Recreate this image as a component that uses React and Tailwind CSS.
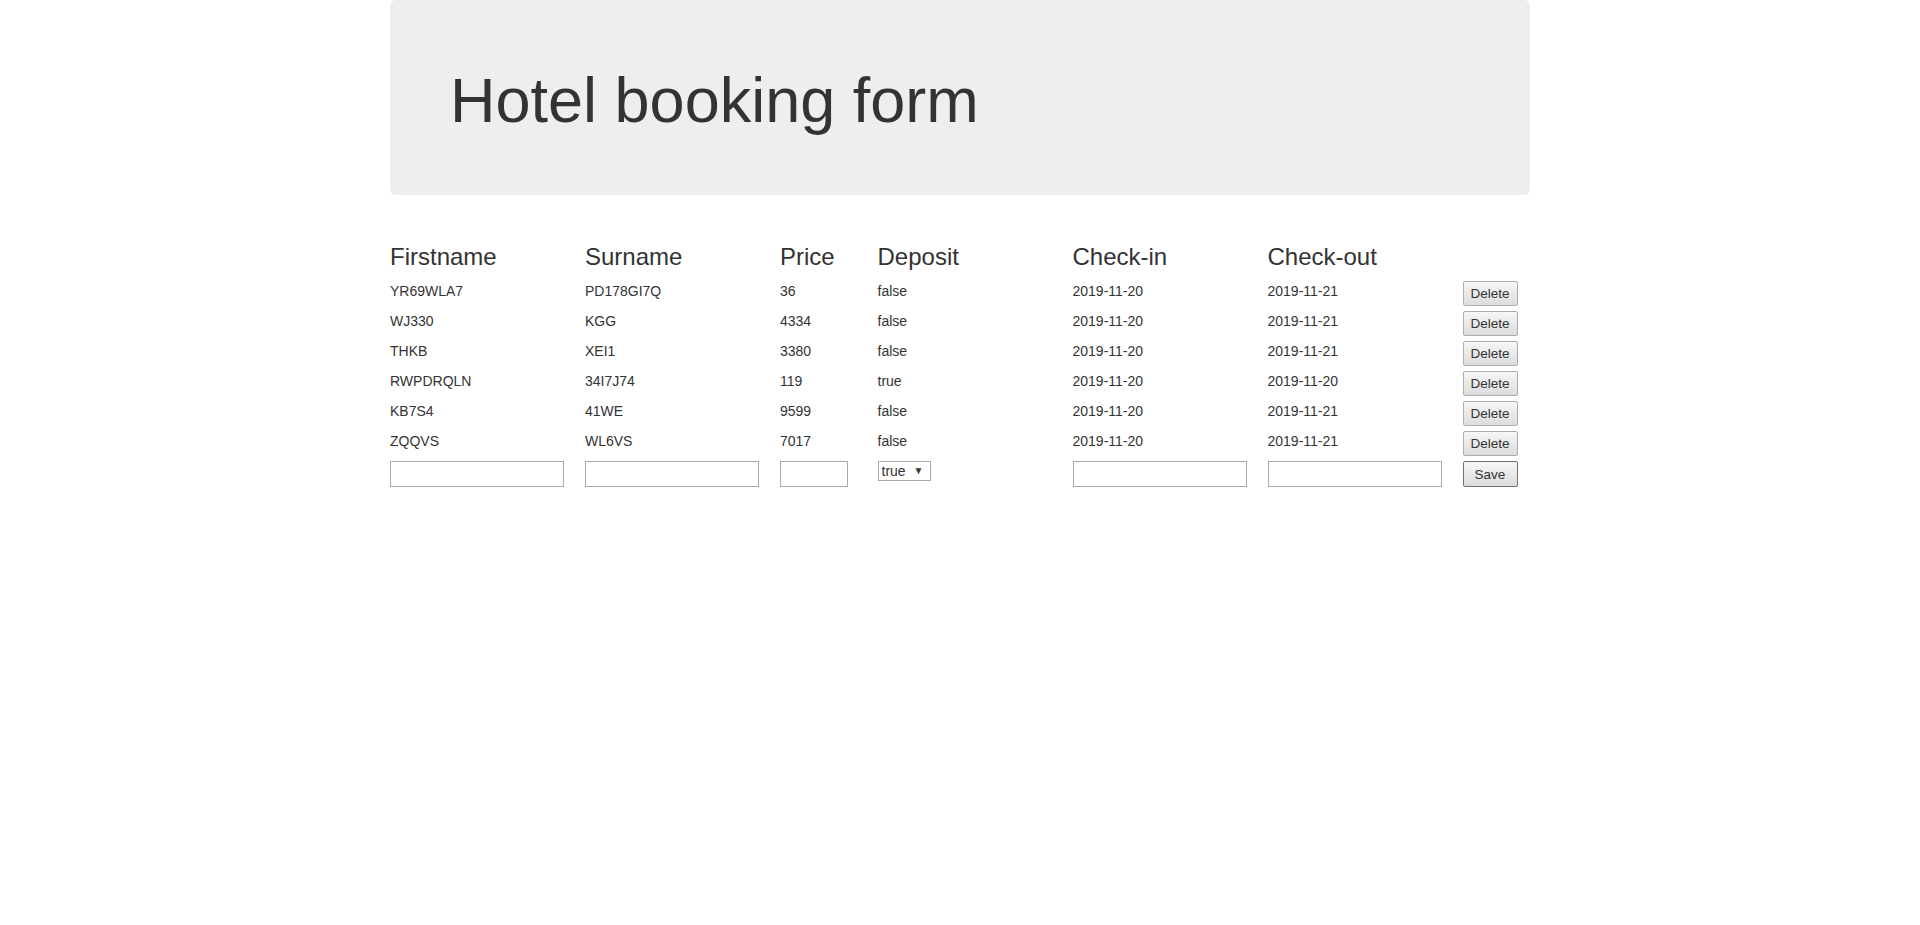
import { useState } from 'react';

const cols = 'grid grid-cols-[195px_195px_97.5px_195px_195px_195px_97.5px] -mx-[15px]';
const cell = 'px-[15px]';

const initialBookings = [
  { id: 1, firstname: 'YR69WLA7', surname: 'PD178GI7Q', price: 36, deposit: false, checkin: '2019-11-20', checkout: '2019-11-21' },
  { id: 2, firstname: 'WJ330', surname: 'KGG', price: 4334, deposit: false, checkin: '2019-11-20', checkout: '2019-11-21' },
  { id: 3, firstname: 'THKB', surname: 'XEI1', price: 3380, deposit: false, checkin: '2019-11-20', checkout: '2019-11-21' },
  { id: 4, firstname: 'RWPDRQLN', surname: '34I7J74', price: 119, deposit: true, checkin: '2019-11-20', checkout: '2019-11-20' },
  { id: 5, firstname: 'KB7S4', surname: '41WE', price: 9599, deposit: false, checkin: '2019-11-20', checkout: '2019-11-21' },
  { id: 6, firstname: 'ZQQVS', surname: 'WL6VS', price: 7017, deposit: false, checkin: '2019-11-20', checkout: '2019-11-21' },
];

const App = () => {
  const [bookings, setBookings] = useState(initialBookings);
  const [form, setForm] = useState({
    firstname: '',
    surname: '',
    price: '',
    deposit: 'true',
    checkin: '',
    checkout: '',
  });

  const handleChange = (e) => {
    const { name, value } = e.target;
    setForm(prev => ({ ...prev, [name]: value }));
  };

  const handleDelete = (id) => {
    setBookings(prev => prev.filter(b => b.id !== id));
  };

  const handleSave = () => {
    setBookings(prev => [
      ...prev,
      { id: Date.now(), ...form, deposit: form.deposit === 'true', price: Number(form.price) },
    ]);
    setForm({ firstname: '', surname: '', price: '', deposit: 'true', checkin: '', checkout: '' });
  };

  const inputClass = 'h-[26px] border border-[#a9a9a9] bg-white px-[2px] text-[13.33px] outline-none';
  const buttonClass = 'h-[25px] w-[55px] rounded-[2px] border bg-gradient-to-b from-[#f7f7f7] to-[#dcdcdc] text-[13.5px] leading-none text-[#333]';

  return (
    <div className="min-h-screen bg-white font-['Liberation_Sans',Arial,sans-serif] text-[14px] leading-[20px] text-[#333]">
      <div className="mx-auto w-[1170px] px-[15px]">
        {/* Jumbotron */}
        <div className="rounded-[6px] bg-[#eeeeee] px-[60px] pt-[48px] pb-[48px]">
          <h1 className="mt-[18px] mb-[12px] text-[63px] leading-[1.1] font-normal">Hotel booking form</h1>
        </div>

        {/* Header */}
        <div className={`${cols} mt-[49px] mb-[11px]`}>
          {['Firstname', 'Surname', 'Price', 'Deposit', 'Check-in', 'Check-out'].map(h => (
            <div key={h} className={cell}>
              <h3 className="text-[24px] leading-[26px] font-normal">{h}</h3>
            </div>
          ))}
          <div className={cell}></div>
        </div>

        {/* Rows */}
        {bookings.map(b => (
          <div key={b.id} className={`${cols} h-[30px]`}>
            <div className={cell}>{b.firstname}</div>
            <div className={cell}>{b.surname}</div>
            <div className={cell}>{b.price}</div>
            <div className={cell}>{String(b.deposit)}</div>
            <div className={cell}>{b.checkin}</div>
            <div className={cell}>{b.checkout}</div>
            <div className={cell}>
              <button onClick={() => handleDelete(b.id)} className={`${buttonClass} border-[#adadad]`}>
                Delete
              </button>
            </div>
          </div>
        ))}

        {/* New booking */}
        <div className={`${cols} h-[30px]`}>
          <div className={cell}>
            <input name="firstname" value={form.firstname} onChange={handleChange} className={`${inputClass} w-[174px]`} />
          </div>
          <div className={cell}>
            <input name="surname" value={form.surname} onChange={handleChange} className={`${inputClass} w-[174px]`} />
          </div>
          <div className={cell}>
            <input name="price" value={form.price} onChange={handleChange} className={`${inputClass} w-[68px]`} />
          </div>
          <div className={cell}>
            <div className="relative w-[53px]">
              <select
                name="deposit"
                value={form.deposit}
                onChange={handleChange}
                className="h-[20px] w-[53px] appearance-none border border-[#a9a9a9] bg-white pl-[3px] text-[14px] leading-[18px] text-[#333] outline-none"
              >
                <option value="true">true</option>
                <option value="false">false</option>
              </select>
              <span className="pointer-events-none absolute right-[7px] top-[4px] text-[10px] leading-[12px] text-[#333]">▼</span>
            </div>
          </div>
          <div className={cell}>
            <input name="checkin" value={form.checkin} onChange={handleChange} className={`${inputClass} w-[174px]`} />
          </div>
          <div className={cell}>
            <input name="checkout" value={form.checkout} onChange={handleChange} className={`${inputClass} w-[174px]`} />
          </div>
          <div className={cell}>
            <button onClick={handleSave} className={`${buttonClass} h-[26px] border-[#707070]`}>
              Save
            </button>
          </div>
        </div>
      </div>
    </div>
  );
};

export default App;
